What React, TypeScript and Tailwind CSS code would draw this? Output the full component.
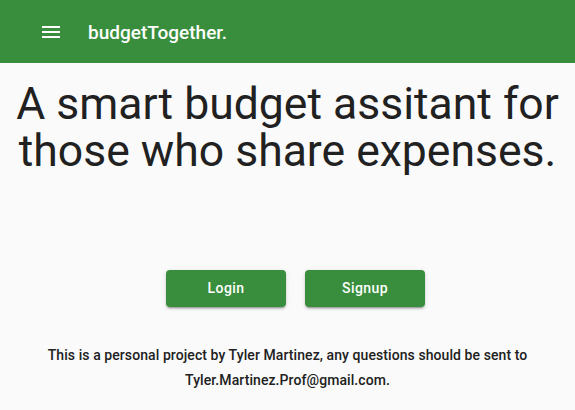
import React from "react";

export default function App() {
  return (
    <div className="min-h-[410px] w-full bg-[#fafafa] font-['Roboto',sans-serif] text-[#212121]">
      <header className="flex h-[63px] items-center bg-[#388e3c] pl-[39px] text-white">
        <svg width="24" height="24" viewBox="0 0 24 24" fill="white">
          <path d="M3 18h18v-2H3v2zm0-5h18v-2H3v2zm0-7v2h18V6H3z" />
        </svg>
        <span className="ml-[25px] mt-[2px] text-[19px] font-medium leading-[32px]">budgetTogether.</span>
      </header>
      <h1 className="mt-[18px] text-center text-[44.5px] font-normal leading-[47px]">
        A smart budget assitant for
        <br />
        those who share expenses.
      </h1>
      <div className="mt-[95px] flex justify-center gap-[19px] pl-[16px]">
        <button className="h-[37px] w-[120px] rounded-[4px] bg-[#388e3c] text-[14px] font-medium tracking-[0.4px] text-white shadow-[0_3px_1px_-2px_rgba(0,0,0,0.2),0_2px_2px_0_rgba(0,0,0,0.14),0_1px_5px_0_rgba(0,0,0,0.12)]">
          Login
        </button>
        <button className="h-[37px] w-[120px] rounded-[4px] bg-[#388e3c] text-[14px] font-medium tracking-[0.4px] text-white shadow-[0_3px_1px_-2px_rgba(0,0,0,0.2),0_2px_2px_0_rgba(0,0,0,0.14),0_1px_5px_0_rgba(0,0,0,0.12)]">
          Signup
        </button>
      </div>
      <p className="mt-[36px] px-4 text-center text-[14px] font-medium leading-[25px] tracking-[0.08px]">
        This is a personal project by Tyler Martinez, any questions should be sent to Tyler.Martinez.Prof@gmail.com.
      </p>
    </div>
  );
}
